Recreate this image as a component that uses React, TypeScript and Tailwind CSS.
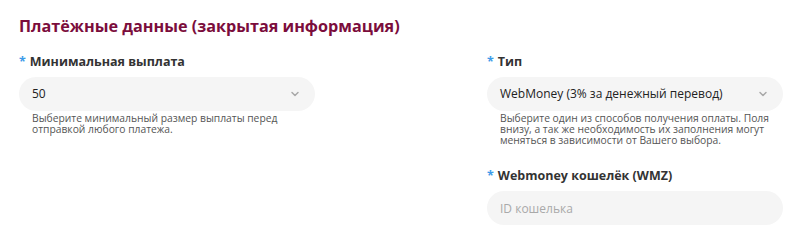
import { ChevronDown } from 'lucide-react';

interface FieldLabelProps {
  text: string;
}

function FieldLabel({ text }: FieldLabelProps): JSX.Element {
  return (
    <label className="mb-[6px] flex h-[18px] items-center text-[12.5px] font-bold leading-[18px] text-[#333]">
      <span className="mr-[4px] text-[#3d9be9]">*</span>
      {text}
    </label>
  );
}

function SelectBox({ value }: { value: string }): JSX.Element {
  return (
    <div className="flex h-[34px] w-full items-center justify-between rounded-full bg-[#f5f5f5] pl-[13px] pr-[14px] text-[12px] text-[#222]">
      <span>{value}</span>
      <ChevronDown className="h-[12px] w-[12px] text-[#a9a9a9]" strokeWidth={3} />
    </div>
  );
}

function Hint({ children }: { children: string }): JSX.Element {
  return <p className="mt-[2px] px-[13px] text-[10.3px] leading-[11px] text-[#555]">{children}</p>;
}

export default function App(): JSX.Element {
  return (
    <div className="h-[247px] w-[803px] bg-white pl-[19px] pr-[20px] pt-[14px] font-['Open_Sans',sans-serif]">
      <h2 className="text-[16.2px] font-bold leading-[24px] text-[#7b0d3c]">
        Платёжные данные (закрытая информация)
      </h2>

      <div className="mt-[15px] grid grid-cols-2 gap-x-[172px]">
        <div>
          <FieldLabel text="Минимальная выплата" />
          <SelectBox value="50" />
          <Hint>Выберите минимальный размер выплаты перед отправкой любого платежа.</Hint>
        </div>

        <div>
          <FieldLabel text="Тип" />
          <SelectBox value="WebMoney (3% за денежный перевод)" />
          <Hint>
            Выберите один из способов получения оплаты. Поля внизу, а так же необходимость их заполнения могут меняться в зависимости от Вашего выбора.
          </Hint>

          <div className="mt-[21px]">
            <FieldLabel text="Webmoney кошелёк (WMZ)" />
            <input
              type="text"
              placeholder="ID кошелька"
              className="h-[34px] w-full rounded-full bg-[#f5f5f5] px-[13px] text-[12px] text-[#222] outline-none placeholder:text-[#a9a9a9]"
            />
          </div>
        </div>
      </div>
    </div>
  );
}
